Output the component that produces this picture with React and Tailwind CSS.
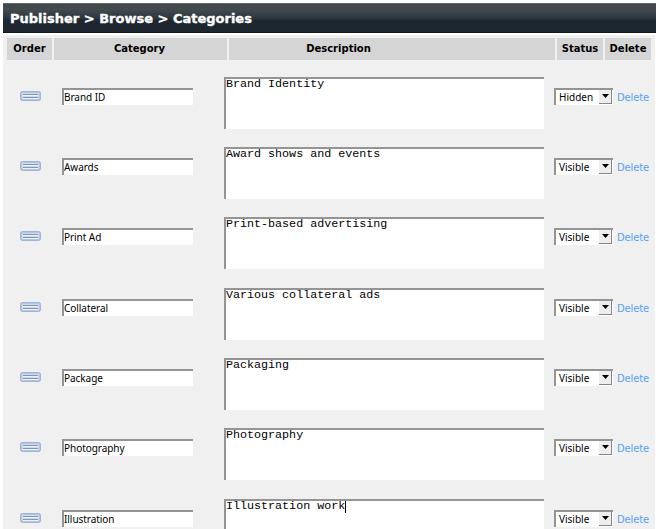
const rows = [
  { name: "Brand ID", description: "Brand Identity", status: "Hidden" },
  { name: "Awards", description: "Award shows and events", status: "Visible" },
  { name: "Print Ad", description: "Print-based advertising", status: "Visible" },
  { name: "Collateral", description: "Various collateral ads", status: "Visible" },
  { name: "Package", description: "Packaging", status: "Visible" },
  { name: "Photography", description: "Photography", status: "Visible" },
  { name: "Illustration", description: "Illustration work", status: "Visible", focused: true },
];

const columns = [
  { label: "Order", width: "w-[45px]" },
  { label: "Category", width: "w-[173px] pr-[2px]" },
  { label: "Description", width: "w-[326px] pr-[107px]" },
  { label: "Status", width: "w-[46px]" },
  { label: "Delete", width: "w-[46px]" },
];

const inset = "border-t-2 border-l-2 border-t-[#949494] border-l-[#949494] bg-white";

function Handle() {
  return (
    <svg width="22" height="11" viewBox="0 0 22 11" className="block shrink-0">
      <rect x="0.5" y="0.5" width="20" height="9" rx="1.8" fill="#b3c7e4" stroke="#9fb5d6" />
      <rect x="2" y="2" width="17" height="6" fill="#cddaee" />
      <path d="M3 3.5h15M3 6.5h15" stroke="#8195b4" />
      <path d="M3 4.5h15M3 7.5h15" stroke="#eef3fb" />
    </svg>
  );
}

function Row({ row }) {
  return (
    <div className="flex h-[70.3px] shrink-0">
      <div className="mt-[14px] ml-[17px] w-[42px]">
        <Handle />
      </div>
      <div className={`mt-[11px] h-[17px] w-[131px] overflow-hidden whitespace-nowrap font-['Noto_Sans',sans-serif] text-[10px] leading-[15px] tracking-[-0.05px] text-black ${inset}`}>
        {row.name}
      </div>
      <div className={`ml-[31px] flex h-[52px] w-[320px] items-start font-['Liberation_Mono',monospace] text-[11.7px] leading-[12px] text-black ${inset}`}>
        <span className="-mt-px">{row.description}</span>
        {row.focused && <span className="h-[12px] w-px bg-black" />}
      </div>
      <div className={`mt-[11px] ml-[10px] flex h-[17px] w-[59px] justify-between font-['Noto_Sans',sans-serif] text-[10px] leading-[15px] text-black ${inset}`}>
        <span className="pl-[3px]">{row.status}</span>
        <span className="mr-[1px] flex h-[14px] w-[13px] justify-center border-r border-b border-[#858585] bg-[#eeeeee] pt-[4px]">
          <svg width="7" height="4" viewBox="0 0 7 4">
            <path d="M0 0h7L3.5 4z" fill="#000" />
          </svg>
        </span>
      </div>
      <a className="mt-[12px] ml-[4px] font-['DejaVu_Sans',sans-serif] text-[10px] leading-[17px] tracking-[-0.15px] text-[#57a2f6]">Delete</a>
    </div>
  );
}

export default function App() {
  return (
    <div className="h-[529px] w-[658px] overflow-hidden bg-white pt-[3px] pl-[3px]">
      <div className="h-[30px] w-[653px] border-t border-b border-t-[#62676b] border-b-[#101820] bg-linear-to-b from-[#424a4d] from-20% via-[#2d3740] via-50% to-[#1e2730] to-60% pl-[7px] font-['DejaVu_Sans',sans-serif] text-[13px] leading-[30px] font-bold whitespace-nowrap text-white [-webkit-text-stroke:0.35px_white]">
        Publisher &gt; Browse &gt; Categories
      </div>
      <div className="mt-[2px] h-[494px] w-[652px] overflow-hidden bg-[#f0f0f0] pt-[3px]">
        <div className="flex gap-[2px] pl-[4px] font-['DejaVu_Sans',sans-serif] text-[10px] leading-[22px] font-bold text-black">
          {columns.map((column) => (
            <div key={column.label} className={`h-[22px] shrink-0 bg-[#d5d5d5] text-center ${column.width}`}>
              {column.label}
            </div>
          ))}
        </div>
        <div className="flex flex-col pt-[16.8px]">
          {rows.map((row) => (
            <Row key={row.name} row={row} />
          ))}
        </div>
      </div>
    </div>
  );
}
